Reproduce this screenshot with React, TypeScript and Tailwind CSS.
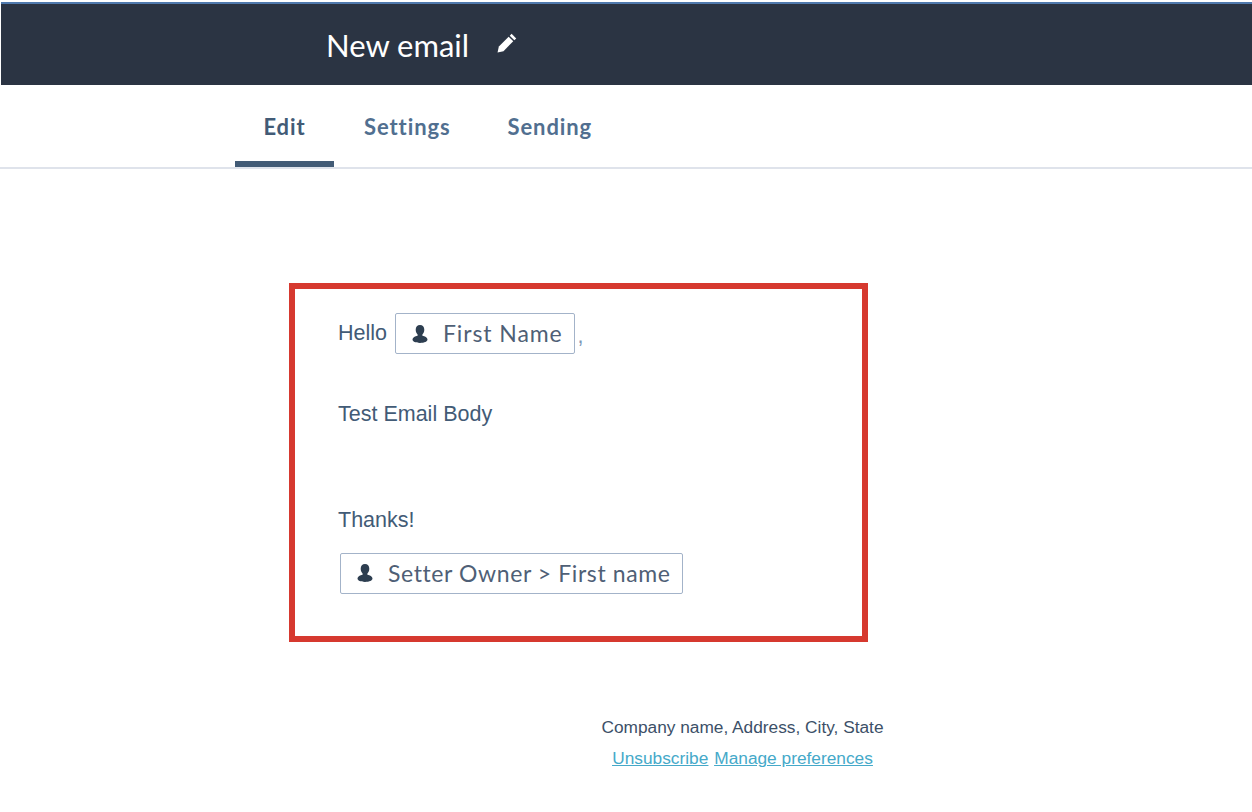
function PersonIcon() {
  return (
    <svg viewBox="0 0 18 20" className="w-[18px] h-[20px] shrink-0" fill="#2d3e50">
      <path d="M9 1c-2.700 0-4.300 2-4.300 4.800 0 2 .8 3.700 1.900 4.700v1.200c-2.600.6-5.100 1.700-5.100 3.900 0 1.900 3 3.400 7.500 3.400s7.500-1.500 7.500-3.400c0-2.200-2.500-3.300-5.100-3.900v-1.200c1.100-1 1.900-2.700 1.900-4.700C13.300 3 11.700 1 9 1z" />
    </svg>
  )
}

function PencilIcon() {
  return (
    <svg viewBox="0 0 20 20" className="w-[22px] h-[22px]" fill="white">
      <path d="M14.200 1.600l4.200 4.200-1.700 1.700-4.200-4.200z" />
      <path d="M11.500 4.300l4.200 4.200-8.900 8.900-5.400 1.200 1.200-5.400z" />
    </svg>
  )
}

function Token({ label, tracking }: { label: string; tracking: string }) {
  return (
    <span className={`inline-flex items-center h-[41px] pl-[15px] pr-[11px] gap-[14px] border border-[#a3b3c9] rounded-[2px] text-[23px] whitespace-nowrap text-[#4f5f76] font-['Lato',sans-serif] ${tracking}`}>
      <PersonIcon />
      {label}
    </span>
  )
}

export default function App() {
  return (
    <div className="w-[1252px] h-[812px] bg-white overflow-hidden font-['Liberation_Sans',sans-serif]">
      <div className="pt-[2px] pl-px">
        <header className="h-[83px] bg-[#2b3443] border-t-2 border-[#4f79ad] flex items-center pl-[325px] pt-[2px] gap-[27px]">
          <span className="text-[31px] text-white font-['Lato',sans-serif]">New email</span>
          <span className="-mt-[6px]"><PencilIcon /></span>
        </header>
      </div>

      <nav className="h-[84px] pl-[235px] flex border-b-2 border-[#dfe3eb] text-[22px] tracking-[0.9px] font-bold text-[#516f90] font-['Lato',sans-serif]">
        <div className="w-[99px] flex justify-center pt-[25px] border-b-[6px] border-[#425b76] text-[#425b76]">Edit</div>
        <div className="pl-[30px] pt-[25px]">Settings</div>
        <div className="pl-[57px] pt-[25px]">Sending</div>
      </nav>

      <div className="pl-[289px] pt-[114px]">
        <section className="w-[579px] h-[359px] border-[6px] border-[#d6392f] pl-[43px] pt-[24px] text-[21.500px] text-[#425b76]">
          <div className="flex items-center h-[41px]">
            <span className="mr-[8px] -mt-[1px]">Hello</span>
            <Token label="First Name" tracking="tracking-[0.9px]" />
            <span className="ml-[3px] mt-[6px] text-[#7c98b6]">,</span>
          </div>
          <p className="mt-[44px]">Test Email Body</p>
          <p className="mt-[74px]">Thanks!</p>
          <div className="mt-[16px] ml-[2px] flex">
            <Token label="Setter Owner > First name" tracking="tracking-[0.6px]" />
          </div>
        </section>
      </div>

      <footer className="mt-[73px] pl-[601px] w-[884px] flex flex-col items-center text-[17.300px] text-[#3c5068]">
        <p className="w-[283px] flex justify-center whitespace-nowrap">Company name, Address, City, State</p>
        <p className="w-[283px] mt-[5px] flex justify-center gap-[6px] whitespace-nowrap text-[#45a9c9] underline">
          <a>Unsubscribe</a>
          <a>Manage preferences</a>
        </p>
      </footer>
    </div>
  )
}
